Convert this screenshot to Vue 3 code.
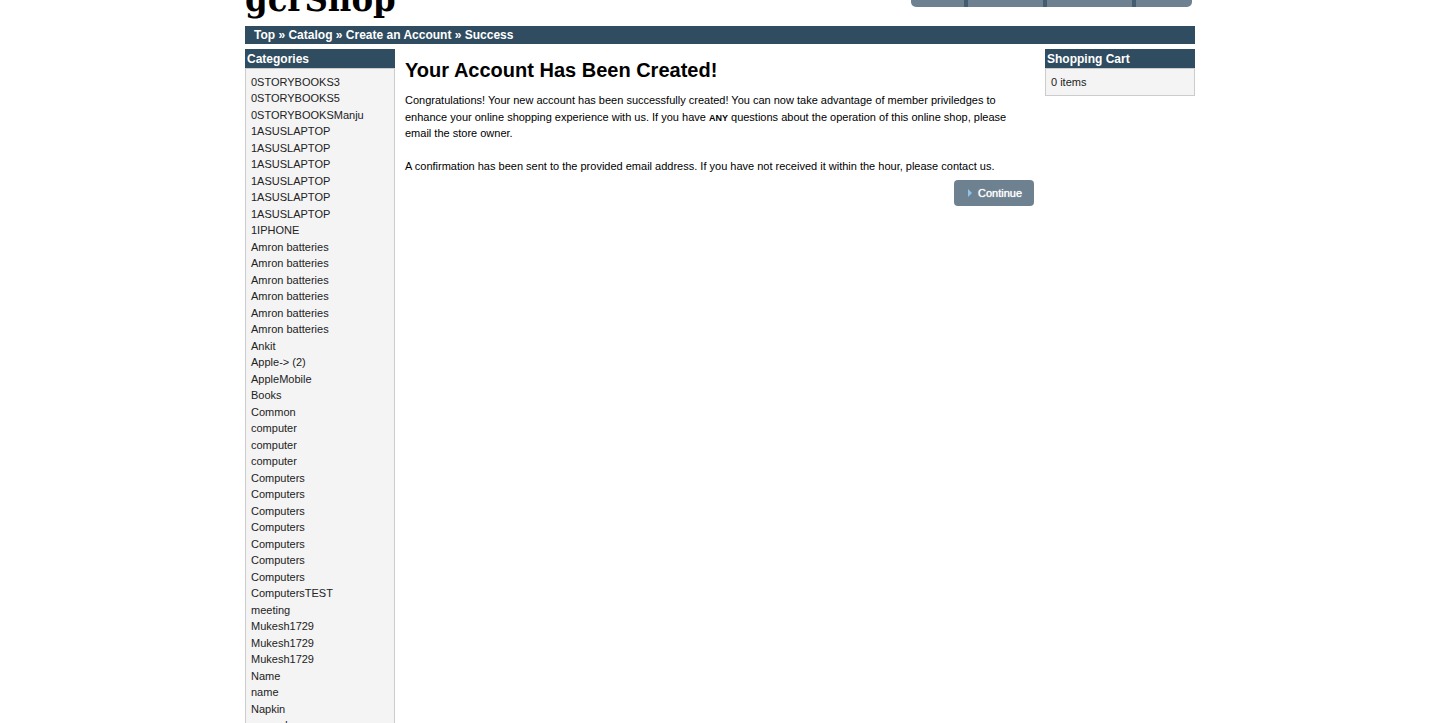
<script setup>
const categories = [
  '0STORYBOOKS3', '0STORYBOOKS5', '0STORYBOOKSManju',
  ...Array(6).fill('1ASUSLAPTOP'),
  '1IPHONE',
  ...Array(6).fill('Amron batteries'),
  'Ankit', 'Apple-> (2)', 'AppleMobile', 'Books', 'Common',
  ...Array(3).fill('computer'),
  ...Array(7).fill('Computers'),
  'ComputersTEST', 'meeting',
  ...Array(3).fill('Mukesh1729'),
  'Name', 'name', 'Napkin', 'nagend'
]
const actions = [
  { label: 'Cart', size: 'small' },
  { label: 'Checkout', size: 'medium' },
  { label: 'My Account', size: 'large' },
  { label: 'Log Off', size: 'last' }
]
const crumbs = ['Top', 'Catalog', 'Create an Account', 'Success']
</script>

<template>
  <div class="viewport">
    <div class="page">
      <header class="header">
        <a class="logo" href="#">gcrShop</a>
        <nav class="actions">
          <a v-for="a in actions" :key="a.label" :class="['action', a.size]" href="#">{{ a.label }}</a>
        </nav>
      </header>

      <nav class="crumbs">
        <template v-for="(c, i) in crumbs" :key="c"><template v-if="i"> » </template><a href="#">{{ c }}</a></template>
      </nav>

      <div class="columns">
        <aside class="side">
          <section class="box">
            <h2>Categories</h2>
            <ul class="box-body list">
              <li v-for="(c, i) in categories" :key="i"><a href="#">{{ c }}</a></li>
            </ul>
          </section>
        </aside>

        <main class="content">
          <h1>Your Account Has Been Created!</h1>
          <p>
            Congratulations! Your new account has been successfully created! You can now take advantage of member priviledges to enhance your online shopping experience with us. If you have <small><b>ANY</b></small> questions about the operation of this online shop, please email the <a href="#">store owner</a>.
          </p>
          <p>
            A confirmation has been sent to the provided email address. If you have not received it within the hour, please <a href="#">contact us</a>.
          </p>
          <div class="buttons">
            <button type="button" class="continue">
              <svg width="4" height="8" viewBox="0 0 4 8" aria-hidden="true"><path d="M0 0L4 4L0 8Z" fill="#8fc3e8" /></svg>
              Continue
            </button>
          </div>
        </main>

        <aside class="side">
          <section class="box">
            <h2>Shopping Cart</h2>
            <div class="box-body">0 items</div>
          </section>
        </aside>
      </div>
    </div>
  </div>
</template>

<style>
body { margin: 0; background: #fff; }
</style>

<style scoped>
* { box-sizing: border-box; }
a { color: inherit; text-decoration: none; }
.viewport {
  height: 100vh;
  overflow: hidden;
  font-family: "Liberation Sans", Arial, sans-serif;
  font-size: 11px;
  line-height: 1.5;
  color: #000;
}
.page { max-width: 950px; margin: 0 auto; }
.header {
  display: flex;
  justify-content: space-between;
  align-items: flex-end;
  height: 26px;
}
.logo {
  font-family: "DejaVu Serif Condensed", "DejaVu Serif", serif;
  font-size: 36px;
  font-weight: bold;
  font-stretch: condensed;
  line-height: 42px;
  padding-bottom: 7px;
}
.actions { display: flex; padding: 0 3px 19px 0; }
.action {
  height: 26px;
  padding-right: 12px;
  border-right: 4px solid #425c70;
  background: #6e8190;
  color: #fff;
  line-height: 26px;
  text-align: right;
  white-space: nowrap;
}
.small { width: 57px; border-radius: 5px 0 0 5px; }
.medium { width: 79px; }
.large { width: 89px; }
.last { width: 56px; padding-right: 8px; border-right: 0; border-radius: 0 5px 5px 0; }
.crumbs {
  height: 18px;
  padding-left: 9px;
  background: #2f4c60;
  color: #fff;
  font-size: 12px;
  font-weight: bold;
  line-height: 18px;
}
.columns { display: flex; align-items: flex-start; padding-top: 5px; }
.side { flex: 0 0 150px; }
.box h2 {
  height: 19px;
  margin: 0;
  padding-left: 2px;
  background: #2f4c60;
  color: #fff;
  font-size: 12px;
  line-height: 20px;
}
.box-body {
  margin: 0;
  padding: 5px;
  border: 1px solid #ccc;
  background: #f4f4f4;
  color: #222;
  line-height: 16px;
  list-style: none;
}
.list { display: grid; grid-auto-rows: 16px 17px; }
.content { flex: 1; min-width: 0; padding: 8px 11px 0 10px; }
h1 { margin: 0 0 9px; font-size: 20px; line-height: 26px; }
p { margin: 0 0 16px; padding-right: 12px; }
p + p { margin-bottom: 6px; }
small { font-size: 9px; line-height: 1; }
.buttons { display: flex; justify-content: flex-end; }
.continue {
  display: flex;
  align-items: center;
  gap: 6px;
  width: 80px;
  height: 26px;
  padding: 0 0 0 14px;
  border: 0;
  border-radius: 4px;
  background: #6e8190;
  color: #fff;
  font: 11px "Liberation Sans", Arial, sans-serif;
  text-shadow: 0 0 1px #fff;
}
</style>
